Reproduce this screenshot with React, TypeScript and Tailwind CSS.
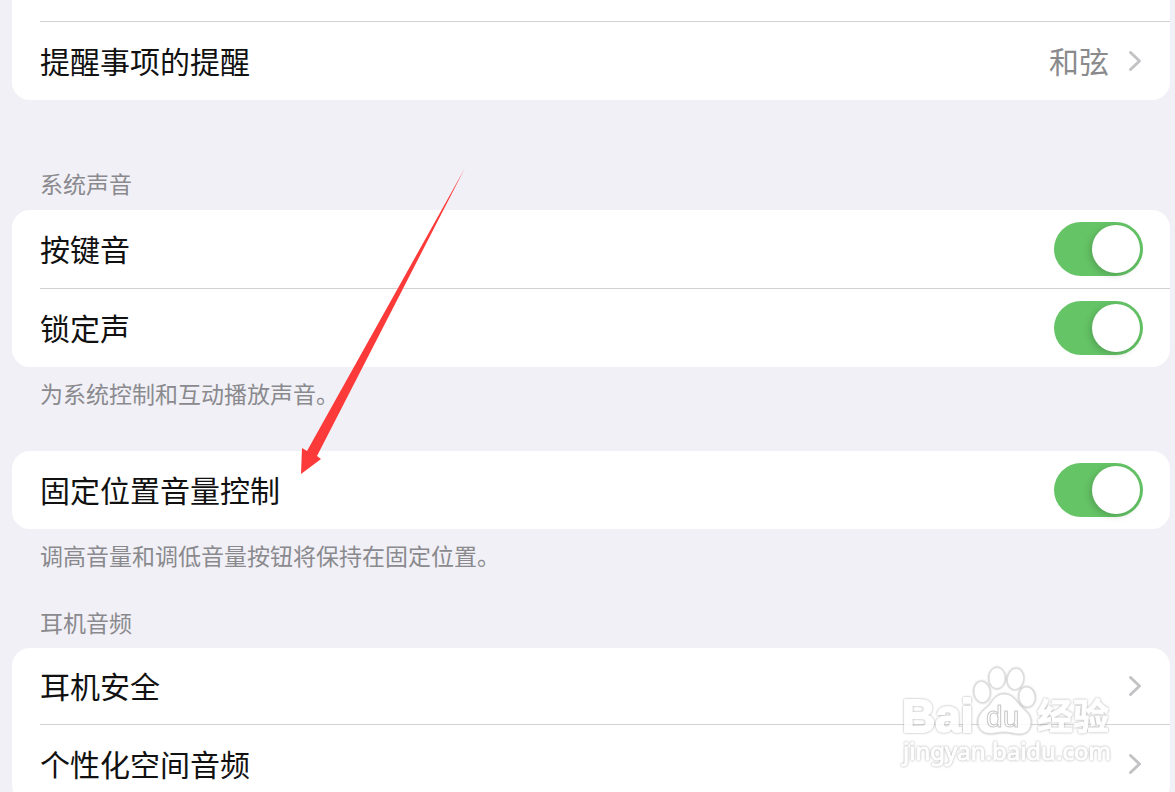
import { useId, useState } from "react";
import type { ReactNode } from "react";

function Chevron() {
  return (
    <svg width="14" height="22" viewBox="0 0 14 22" fill="none" className="shrink-0" aria-hidden="true">
      <path d="M2.5 2.5 L11.5 11 L2.5 19.5" stroke="#c3c3c6" strokeWidth="3" strokeLinecap="round" strokeLinejoin="round" />
    </svg>
  );
}

function Card({ children }: { children: ReactNode }) {
  return <div className="rounded-[18px] bg-white pl-7">{children}</div>;
}

function Separator() {
  return <div className="h-px bg-[#d2d2d4]" />;
}

function LinkRow({ label, value }: { label: string; value?: string }) {
  return (
    <a href="#" className="flex h-full items-center justify-between pr-7 text-[30px] leading-10">
      <span className="pb-0.5">{label}</span>
      <span className="flex items-center gap-[19px] text-[#8a8a8c]">
        {value && <span className="pb-0.5">{value}</span>}
        <Chevron />
      </span>
    </a>
  );
}

function ToggleRow({ label }: { label: string }) {
  const id = useId();
  const [on, setOn] = useState(true);

  return (
    <div className="flex h-[78px] items-center justify-between pr-[27px] text-[30px] leading-10">
      <label htmlFor={id} className="pb-0.5">
        {label}
      </label>
      <input
        id={id}
        type="checkbox"
        role="switch"
        checked={on}
        onChange={(e) => setOn(e.target.checked)}
        className="flex h-[54px] w-[89px] shrink-0 cursor-pointer appearance-none items-center rounded-full bg-[#e9e9ea] px-[3px] transition-colors before:size-12 before:rounded-full before:bg-white before:shadow-[-2px_2px_7px_rgba(0,0,0,0.18)] checked:justify-end checked:bg-[#65c466]"
      />
    </div>
  );
}

function Arrow() {
  return (
    <svg width="166" height="308" viewBox="0 0 166 308" className="pointer-events-none absolute top-[167px] left-[300px]" aria-hidden="true">
      <path d="M165 1 L7 284 L2 281 L1 307 L21 292 L17 289 Z" fill="#fd3a3a" />
    </svg>
  );
}

function Watermark() {
  return (
    <svg
      width="216"
      height="112"
      viewBox="0 0 216 112"
      className="pointer-events-none absolute right-[59px] bottom-5 opacity-85 drop-shadow-[0_0_1px_#9a9a9a]"
      fill="#fff"
      stroke="#fff"
      strokeLinejoin="round"
    >
      <text x="2" y="72" fontSize="46" fontWeight="700" fontFamily="Liberation Sans, sans-serif" strokeWidth="2">Bai</text>
      <g stroke="#dadada">
        <ellipse cx="82" cy="32" rx="8" ry="10.5" transform="rotate(-8 82 32)" />
        <ellipse cx="97" cy="18" rx="8" ry="10.5" />
        <ellipse cx="115.5" cy="19" rx="8" ry="10.5" transform="rotate(8 115.5 19)" />
        <ellipse cx="127" cy="37" rx="8" ry="10" transform="rotate(-8 127 37)" />
        <path d="M104 34 C98 34 94 38 91 43 C87 49 78 52 78 62 C78 69 83 73.5 90 73.5 C95 73.5 99 72 104 72 C110 72 114 74 120 74 C127 74 131 69 131 62 C131 53 122 49 118 43 C114 38 111 34 104 34 Z" />
      </g>
      <text x="86" y="67" fontSize="30" fontFamily="Liberation Sans, sans-serif" stroke="#bdbdbd">du</text>
      <text x="137" y="70" fontSize="36" fontWeight="700" fontFamily="Noto Sans CJK SC, sans-serif" strokeWidth="1">经验</text>
      <text x="3" y="100" fontSize="24" fontFamily="Noto Sans, sans-serif" strokeWidth="1">jingyan.baidu.com</text>
    </svg>
  );
}

export default function App() {
  return (
    <main className="relative h-screen overflow-hidden bg-[#f1f0f6] pr-[5px] pl-3 font-['Noto_Sans_CJK_SC',sans-serif] text-[#111]">
      <div className="rounded-b-[18px] bg-white pt-[21px] pl-7">
        <Separator />
        <div className="h-[78px]">
          <LinkRow label="提醒事项的提醒" value="和弦" />
        </div>
      </div>

      <section>
        <h2 className="px-7 pt-[67px] pb-[11px] text-[23px] leading-8 text-[#8a8a8e]">系统声音</h2>
        <Card>
          <ToggleRow label="按键音" />
          <Separator />
          <ToggleRow label="锁定声" />
        </Card>
        <p className="px-7 pt-[10px] text-[23px] leading-8 text-[#8a8a8e]">为系统控制和互动播放声音。</p>
      </section>

      <section className="pt-[42px]">
        <Card>
          <ToggleRow label="固定位置音量控制" />
        </Card>
        <p className="px-7 pt-[10px] text-[23px] leading-8 text-[#8a8a8e]">调高音量和调低音量按钮将保持在固定位置。</p>
      </section>

      <section>
        <h2 className="px-7 pt-[35px] pb-[10px] text-[23px] leading-8 text-[#8a8a8e]">耳机音频</h2>
        <Card>
          <div className="h-[76px]">
            <LinkRow label="耳机安全" />
          </div>
          <Separator />
          <div className="h-[78px]">
            <LinkRow label="个性化空间音频" />
          </div>
        </Card>
      </section>

      <Arrow />
      <Watermark />
    </main>
  );
}
